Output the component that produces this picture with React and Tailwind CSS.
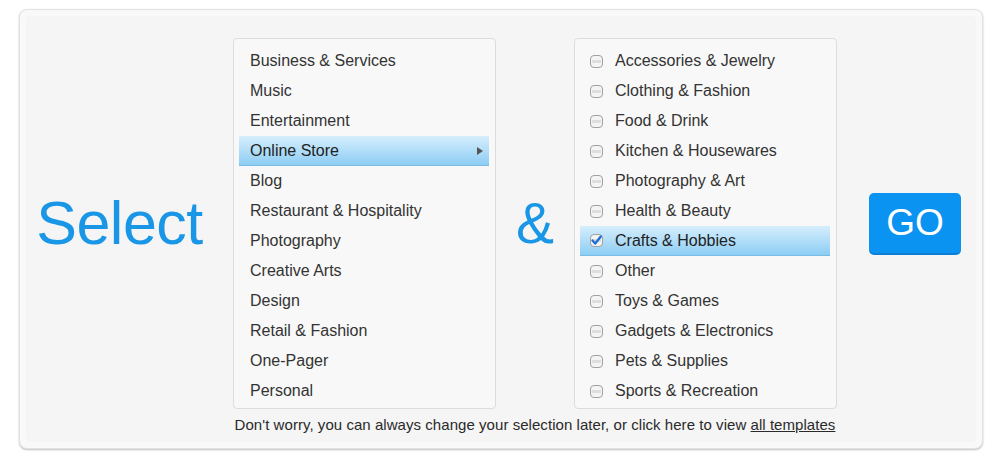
const categories = [
  "Business & Services",
  "Music",
  "Entertainment",
  "Online Store",
  "Blog",
  "Restaurant & Hospitality",
  "Photography",
  "Creative Arts",
  "Design",
  "Retail & Fashion",
  "One-Pager",
  "Personal",
];

const subcategories = [
  "Accessories & Jewelry",
  "Clothing & Fashion",
  "Food & Drink",
  "Kitchen & Housewares",
  "Photography & Art",
  "Health & Beauty",
  "Crafts & Hobbies",
  "Other",
  "Toys & Games",
  "Gadgets & Electronics",
  "Pets & Supplies",
  "Sports & Recreation",
];

function Checkbox({ checked }) {
  return (
    <svg width="13" height="13" viewBox="0 0 13 13" className="shrink-0">
      <rect x="0.5" y="0.5" width="12" height="12" rx="3.5" fill="#f4f4f4" stroke="#a0a0a0" />
      <rect x="2" y="5" width="9" height="3" fill="#dedede" />
      {checked && (
        <path d="M2.5 6.5 L5.2 9.5 L10.8 2.5" fill="none" stroke="#1d6fd1" strokeWidth="2.4" strokeLinecap="round" strokeLinejoin="round" />
      )}
    </svg>
  );
}

export default function App() {
  return (
    <div className="w-[1006px] h-[465px] bg-white pt-[9px] font-['Liberation_Sans',Arial,sans-serif]">
      <div className="ml-[19px] w-[964px] h-[440px] rounded-[8px] border border-[#e2e2e2] bg-[#f9f9f9] shadow-[0_1px_2px_rgba(0,0,0,0.25)] p-[6px]">
        <div className="h-full rounded-[4px] bg-[#f5f5f5] pt-[22px]">
          <div className="flex items-stretch h-[371px]">
            <div className="w-[207px] flex items-center justify-center pr-[20px]">
              <span className="text-[#1a96e6] text-[61px] leading-none tracking-[-0.5px]">Select</span>
            </div>

            <div className="w-[263px] rounded-[4px] border border-[#dcdcdc] bg-[#f8f8f8] pt-[7px] pl-[5px] pr-[6px]">
              {categories.map((c) => {
                const active = c === "Online Store";
                return (
                  <div
                    key={c}
                    className={
                      active
                        ? "h-[30px] flex items-center justify-between pl-[11px] pr-[6px] text-[16px] text-[#222] bg-gradient-to-b from-[#d6eefc] to-[#8ccdf4] border-b border-[#7bbce6]"
                        : "h-[30px] flex items-center pl-[11px] text-[16px] text-[#333]"
                    }
                  >
                    <span>{c}</span>
                    {active && (
                      <svg width="6" height="8" viewBox="0 0 6 8">
                        <path d="M0 0 L6 4 L0 8 Z" fill="#555" />
                      </svg>
                    )}
                  </div>
                );
              })}
            </div>

            <div className="w-[78px] flex items-center justify-center">
              <span className="text-[#1a96e6] text-[57px] leading-none">&amp;</span>
            </div>

            <div className="w-[263px] rounded-[4px] border border-[#dcdcdc] bg-[#f8f8f8] pt-[7px] pl-[5px] pr-[6px]">
              {subcategories.map((c) => {
                const active = c === "Crafts & Hobbies";
                return (
                  <div
                    key={c}
                    className={
                      active
                        ? "h-[30px] flex items-center gap-[12px] pl-[10px] text-[16px] text-[#222] bg-gradient-to-b from-[#d6eefc] to-[#8ccdf4] border-b border-[#7bbce6]"
                        : "h-[30px] flex items-center gap-[12px] pl-[10px] text-[16px] text-[#333]"
                    }
                  >
                    <Checkbox checked={active} />
                    <span>{c}</span>
                  </div>
                );
              })}
            </div>

            <div className="flex-1 flex items-center justify-center pl-[17px]">
              <button className="w-[92px] h-[62px] rounded-[5px] bg-[#0b93f2] border-b-2 border-[#0a7fd6] text-white text-[37px] leading-none">
                GO
              </button>
            </div>
          </div>

          <div className="ml-[207px] w-[604px] text-center text-[15px] tracking-[0.05px] text-[#2a2a2a] mt-[5px]">
            Don't worry, you can always change your selection later, or click here to view{" "}
            <a className="underline">all templates</a>
          </div>
        </div>
      </div>
    </div>
  );
}
